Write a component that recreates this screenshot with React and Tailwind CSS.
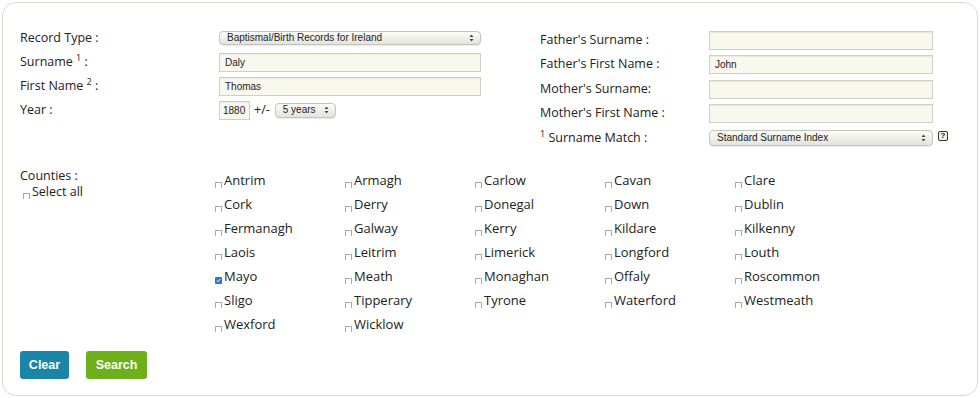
const counties = [
  ["Antrim", "Armagh", "Carlow", "Cavan", "Clare"],
  ["Cork", "Derry", "Donegal", "Down", "Dublin"],
  ["Fermanagh", "Galway", "Kerry", "Kildare", "Kilkenny"],
  ["Laois", "Leitrim", "Limerick", "Longford", "Louth"],
  ["Mayo", "Meath", "Monaghan", "Offaly", "Roscommon"],
  ["Sligo", "Tipperary", "Tyrone", "Waterford", "Westmeath"],
  ["Wexford", "Wicklow"],
];

const Arrows = () => (
  <svg width="5" height="8" viewBox="0 0 5 8" className="shrink-0">
    <path d="M2.5 0.5 L4.5 3 L0.5 3 Z" fill="#444" />
    <path d="M2.5 7.5 L4.5 5 L0.5 5 Z" fill="#444" />
  </svg>
);

const Select = ({ value, className }) => (
  <div
    className={`flex items-center justify-between rounded-[4px] border border-[#c4c4bc] bg-gradient-to-b from-[#fbfbf8] to-[#e4e4de] pl-[7px] pr-[6px] text-[10px] text-[#222] shadow-[0_1px_0_rgba(0,0,0,0.08)] ${className}`}
    style={{ fontFamily: '"Liberation Sans", Arial, sans-serif' }}
  >
    <span className="leading-none">{value}</span>
    <Arrows />
  </div>
);

const Input = ({ value, className }) => (
  <div
    className={`flex h-[19px] items-center border border-[#cfcfc2] bg-[#f9f8ef] px-[5px] text-[10px] text-[#222] shadow-[inset_0_1px_1px_rgba(0,0,0,0.06)] ${className}`}
    style={{ fontFamily: '"Liberation Sans", Arial, sans-serif' }}
  >
    {value}
  </div>
);

const Box = ({ checked }) =>
  checked ? (
    <span className="flex h-[7px] w-[7px] shrink-0 translate-y-[3px] items-center justify-center rounded-[1px] bg-[#2f74d8]">
      <svg width="5" height="5" viewBox="0 0 5 5">
        <path d="M0.8 2.6 L2 3.8 L4.2 1" stroke="white" strokeWidth="1" fill="none" />
      </svg>
    </span>
  ) : (
    <span className="block h-[6px] w-[7px] shrink-0 translate-y-[4px] rounded-t-[1px] border-x border-t border-[#a9a9a9] border-b-0" />
  );

export default function App() {
  return (
    <div
      className="h-[398px] w-[980px] bg-white p-[2px] text-[12.5px] text-[#222]"
      style={{ fontFamily: '"Open Sans", "Noto Sans", sans-serif' }}
    >
      <div className="flex h-[394px] flex-col rounded-[14px] border border-[#dadad2] pl-[17px]">
        {/* top fields */}
        <div className="flex h-[145px] items-start">
          <div className="flex w-[461px] flex-col pt-[23px]">
            <div className="flex h-6 items-center">
              <div className="w-[199px]">Record Type :</div>
              <Select value="Baptismal/Birth Records for Ireland" className="h-[14px] w-[262px]" />
            </div>
            <div className="flex h-6 items-center">
              <div className="w-[199px]">
                Surname <sup className="text-[9px]">1</sup> :
              </div>
              <Input value="Daly" className="w-[262px]" />
            </div>
            <div className="flex h-6 items-center">
              <div className="w-[199px]">
                First Name <sup className="text-[9px]">2</sup> :
              </div>
              <Input value="Thomas" className="w-[262px]" />
            </div>
            <div className="flex h-6 items-center">
              <div className="w-[199px]">Year :</div>
              <Input value="1880" className="w-[31px] !px-[3px]" />
              <span className="ml-[4px] mr-[5px]">+/-</span>
              <Select value="5 years" className="h-[15px] w-[61px]" />
            </div>
          </div>

          <div className="ml-[59px] flex flex-col pt-[25px]">
            {[
              ["Father's Surname :", ""],
              ["Father's First Name :", "John"],
              ["Mother's Surname:", ""],
              ["Mother's First Name :", ""],
            ].map(([l, v]) => (
              <div key={l} className="flex h-[24.5px] items-center">
                <div className="w-[169px]">{l}</div>
                <Input value={v} className="w-[224px]" />
              </div>
            ))}
            <div className="flex h-6 items-center">
              <div className="w-[169px]">
                <sup className="text-[9px]">1</sup> Surname Match :
              </div>
              <Select value="Standard Surname Index" className="h-[16px] w-[224px]" />
              <span
                className="ml-[5px] -translate-y-[2px] flex h-[10px] w-[10px] items-center justify-center rounded-[2px] border border-[#333] bg-[#f6f3dc] text-[8px] font-bold leading-none"
                style={{ fontFamily: '"Liberation Sans", Arial, sans-serif' }}
              >
                ?
              </span>
            </div>
          </div>
        </div>

        {/* counties */}
        <div className="mt-[20px] flex">
          <div className="w-[195px] leading-[16px]">
            <div>Counties :</div>
            <div className="flex items-center">
              <span className="ml-[3px] mr-[2px] flex">
                <Box />
              </span>
              <span>Select all</span>
            </div>
          </div>
          <div className="grid grid-cols-[repeat(5,130px)] pt-[1px] text-[13px]">
            {counties.flat().map((c) => (
              <div key={c} className="flex h-6 items-center">
                <Box checked={c === "Mayo"} />
                <span className="ml-[2px]">{c}</span>
              </div>
            ))}
          </div>
        </div>

        {/* buttons */}
        <div
          className="mt-[14px] flex gap-[17px] text-[12.5px] font-bold text-white"
          style={{ fontFamily: '"Liberation Sans", Arial, sans-serif' }}
        >
          <button className="h-[28px] w-[49px] rounded-[3px] bg-[#1a85a6]">Clear</button>
          <button className="h-[28px] w-[61px] rounded-[3px] bg-[#6db01b]">Search</button>
        </div>
      </div>
    </div>
  );
}
